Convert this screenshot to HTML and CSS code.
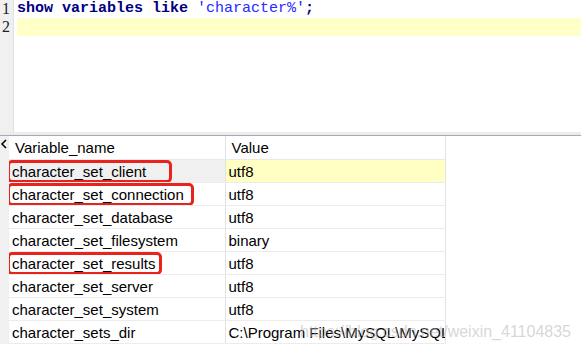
FILE: index.html
```html
<!DOCTYPE html>
<html lang="en">
  <head>
    <meta charset="UTF-8" />
    <title>show variables like 'character%'</title>
    <link rel="stylesheet" href="styles.css">
  </head>
  <body>
    <div class="window">
      <!-- query editor -->
      <div class="editor">
        <div class="gutter">
          <div class="num">1</div>
          <div class="num">2</div>
        </div>
        <div class="code">
          <div class="line"><span class="kw">show variables like</span> <span class="str">'character%'</span><span class="kw">;</span></div>
          <div class="line current"></div>
        </div>
      </div>

      <div class="splitter"></div>

      <!-- result grid -->
      <div class="results">
        <div class="side">
          <div class="tab-arrow">
            <svg width="8" height="10" viewBox="0 0 8 10"><path d="M6 1 L2 5 L6 9" fill="none" stroke="#000" stroke-width="1.6"/></svg>
          </div>
        </div>
        <table class="grid">
          <colgroup>
            <col class="col-name" />
            <col class="col-value" />
          </colgroup>
          <thead>
            <tr>
              <th>Variable_name</th>
              <th>Value</th>
            </tr>
          </thead>
          <tbody>
            <tr class="selected">
              <td><span class="mark mark-client">character_set_client</span></td>
              <td>utf8</td>
            </tr>
            <tr>
              <td><span class="mark mark-connection">character_set_connection</span></td>
              <td>utf8</td>
            </tr>
            <tr>
              <td>character_set_database</td>
              <td>utf8</td>
            </tr>
            <tr>
              <td>character_set_filesystem</td>
              <td>binary</td>
            </tr>
            <tr>
              <td><span class="mark mark-results">character_set_results</span></td>
              <td>utf8</td>
            </tr>
            <tr>
              <td>character_set_server</td>
              <td>utf8</td>
            </tr>
            <tr>
              <td>character_set_system</td>
              <td>utf8</td>
            </tr>
            <tr>
              <td>character_sets_dir</td>
              <td>C:\Program Files\MySQL\MySQL Server 5.7\share\charsets\</td>
            </tr>
          </tbody>
        </table>
      </div>

      <div class="watermark">https://blog.csdn.net/weixin_41104835</div>
    </div>
  </body>
</html>
```

FILE: styles.css
```css
body {
  margin: 0;
  background: #fff;
  font-family: "Liberation Sans", Arial, sans-serif;
}

.window {
  position: relative;
  width: 581px;
  height: 344px;
  overflow: hidden;
}

/* editor */
.editor {
  display: flex;
  height: 132px;
}

.gutter {
  width: 13px;
  background: #f0f0f0;
  border-right: 1px solid #e2e2e2;
}

.num {
  height: 18px;
  line-height: 18px;
  padding-left: 2px;
  font-family: "Liberation Serif", "Times New Roman", serif;
  font-size: 16px;
  color: #222;
}

.code {
  flex: 1;
  padding-left: 3px;
}

.line {
  height: 18px;
  line-height: 17px;
  font-family: "Liberation Mono", "Courier New", monospace;
  font-size: 15px;
  white-space: pre;
}

.line.current {
  background: #ffffc8;
}

.kw {
  color: #000080;
  font-weight: bold;
}

.str {
  color: #2a2aff;
}

.splitter {
  height: 3px;
  background: #ececec;
  border-bottom: 1px solid #a9a9b9;
}

/* results */
.results {
  display: flex;
}

.side {
  width: 9px;
  background: #f0f0f0;
  height: 208px;
}

.tab-arrow {
  height: 12px;
  padding-top: 3px;
}

.tab-arrow svg {
  display: block;
}

.grid {
  width: 436px;
  border-collapse: collapse;
  table-layout: fixed;
  font-size: 15px;
  color: #000;
}

.col-name {
  width: 216px;
}

.col-value {
  width: 220px;
}

.grid th {
  height: 23px;
  font-weight: normal;
  text-align: left;
  border-right: 1px solid #e2e2e2;
  border-bottom: 1px solid #e8e8e8;
  padding: 0 0 0 6px;
}

.grid td {
  height: 22px;
  padding: 0 0 0 3px;
  border-right: 1px solid #e2e2e2;
  border-bottom: 1px solid #ececec;
  white-space: nowrap;
  overflow: hidden;
}

.grid tr.selected td:first-child {
  background: #f0f0f0;
}

.grid tr.selected td:last-child {
  background: #ffffc4;
}

/* red annotation boxes */
.mark {
  position: relative;
}

.mark::after {
  content: "";
  position: absolute;
  left: -5px;
  top: -3px;
  bottom: -3px;
  border: 3px solid #e8231d;
  border-radius: 5px;
}

.mark-client::after {
  right: -26px;
}

.mark-connection::after {
  right: -10px;
}

.mark-results::after {
  right: -7px;
}

.watermark {
  position: absolute;
  left: 300px;
  top: 323px;
  font-size: 16px;
  color: rgba(180, 180, 180, 0.55);
  white-space: nowrap;
}
```
